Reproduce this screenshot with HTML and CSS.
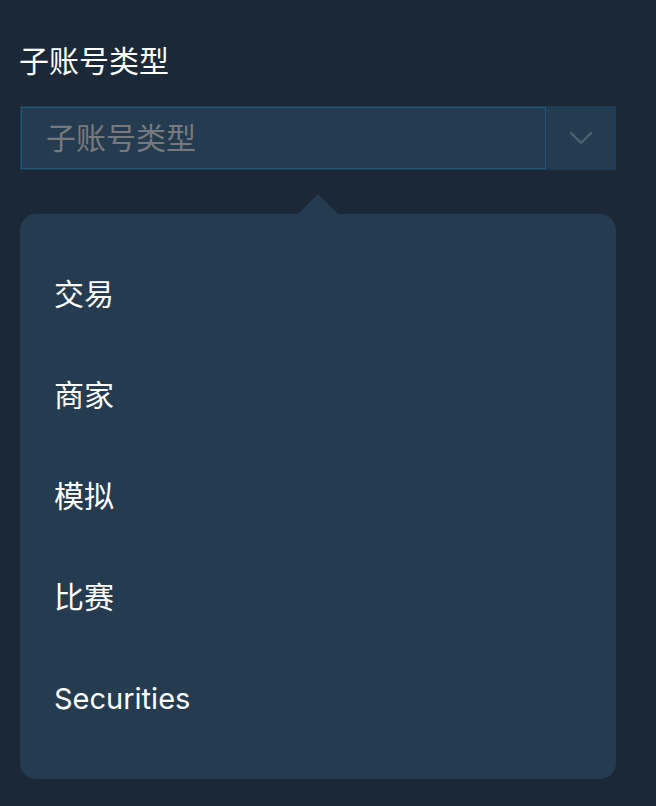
FILE: index.html
```html
<!DOCTYPE html>
<html lang="zh">
<head>
<meta charset="utf-8">
<link rel="stylesheet" href="styles.css">
</head>
<body>
<div class="page">
  <div class="field-label">子账号类型</div>
  <div class="select">
    <div class="select-input">子账号类型</div>
    <div class="select-addon">
      <svg width="24" height="14" viewBox="0 0 24 14"><path d="M2 2 L12 12 L22 2" fill="none" stroke="#4d6072" stroke-width="2.4" stroke-linecap="round" stroke-linejoin="round"/></svg>
    </div>
  </div>
  <div class="popover">
    <div class="popover-arrow"></div>
    <ul class="menu">
      <li class="menu-item">交易</li>
      <li class="menu-item">商家</li>
      <li class="menu-item">模拟</li>
      <li class="menu-item">比赛</li>
      <li class="menu-item">Securities</li>
    </ul>
  </div>
</div>
</body>
</html>
```
FILE: styles.css
```css
html, body {
  margin: 0;
  padding: 0;
  background: #1a2838;
}
body {
  font-family: Inter, "Noto Sans CJK SC", sans-serif;
  color: #ffffff;
}
.page {
  padding: 41px 40px 0 20px;
  width: 596px;
}
.field-label {
  font-size: 30px;
  line-height: 40px;
  height: 40px;
  margin-bottom: 25px;
  margin-left: -1px;
}
.select {
  display: flex;
  height: 64px;
  box-sizing: border-box;
  border: 1px solid #1c3b58;
  background: #253b50;
}
.select-input {
  flex: 1;
  box-sizing: border-box;
  border: 1px solid #275479;
  padding-left: 24px;
  font-size: 30px;
  line-height: 60px;
  color: #777a7c;
}
.select-addon {
  width: 68px;
  display: flex;
  align-items: center;
  justify-content: center;
  border-left: 1px solid #1c3b58;
}
.select-addon svg {
  display: block;
}
.popover {
  position: relative;
  margin-top: 44px;
  background: #253b50;
  border-radius: 16px;
  padding: 30px 0 30px;
}
.popover-arrow {
  position: absolute;
  top: -20px;
  left: 278px;
  width: 0;
  height: 0;
  border-left: 20px solid transparent;
  border-right: 20px solid transparent;
  border-bottom: 20px solid #253b50;
}
.menu {
  list-style: none;
  margin: 0;
  padding: 0;
}
.menu-item {
  height: 101px;
  line-height: 101px;
  padding-left: 34px;
  font-size: 30px;
  color: #ffffff;
}
.menu-item:last-child {
  font-size: 29px;
}
```
